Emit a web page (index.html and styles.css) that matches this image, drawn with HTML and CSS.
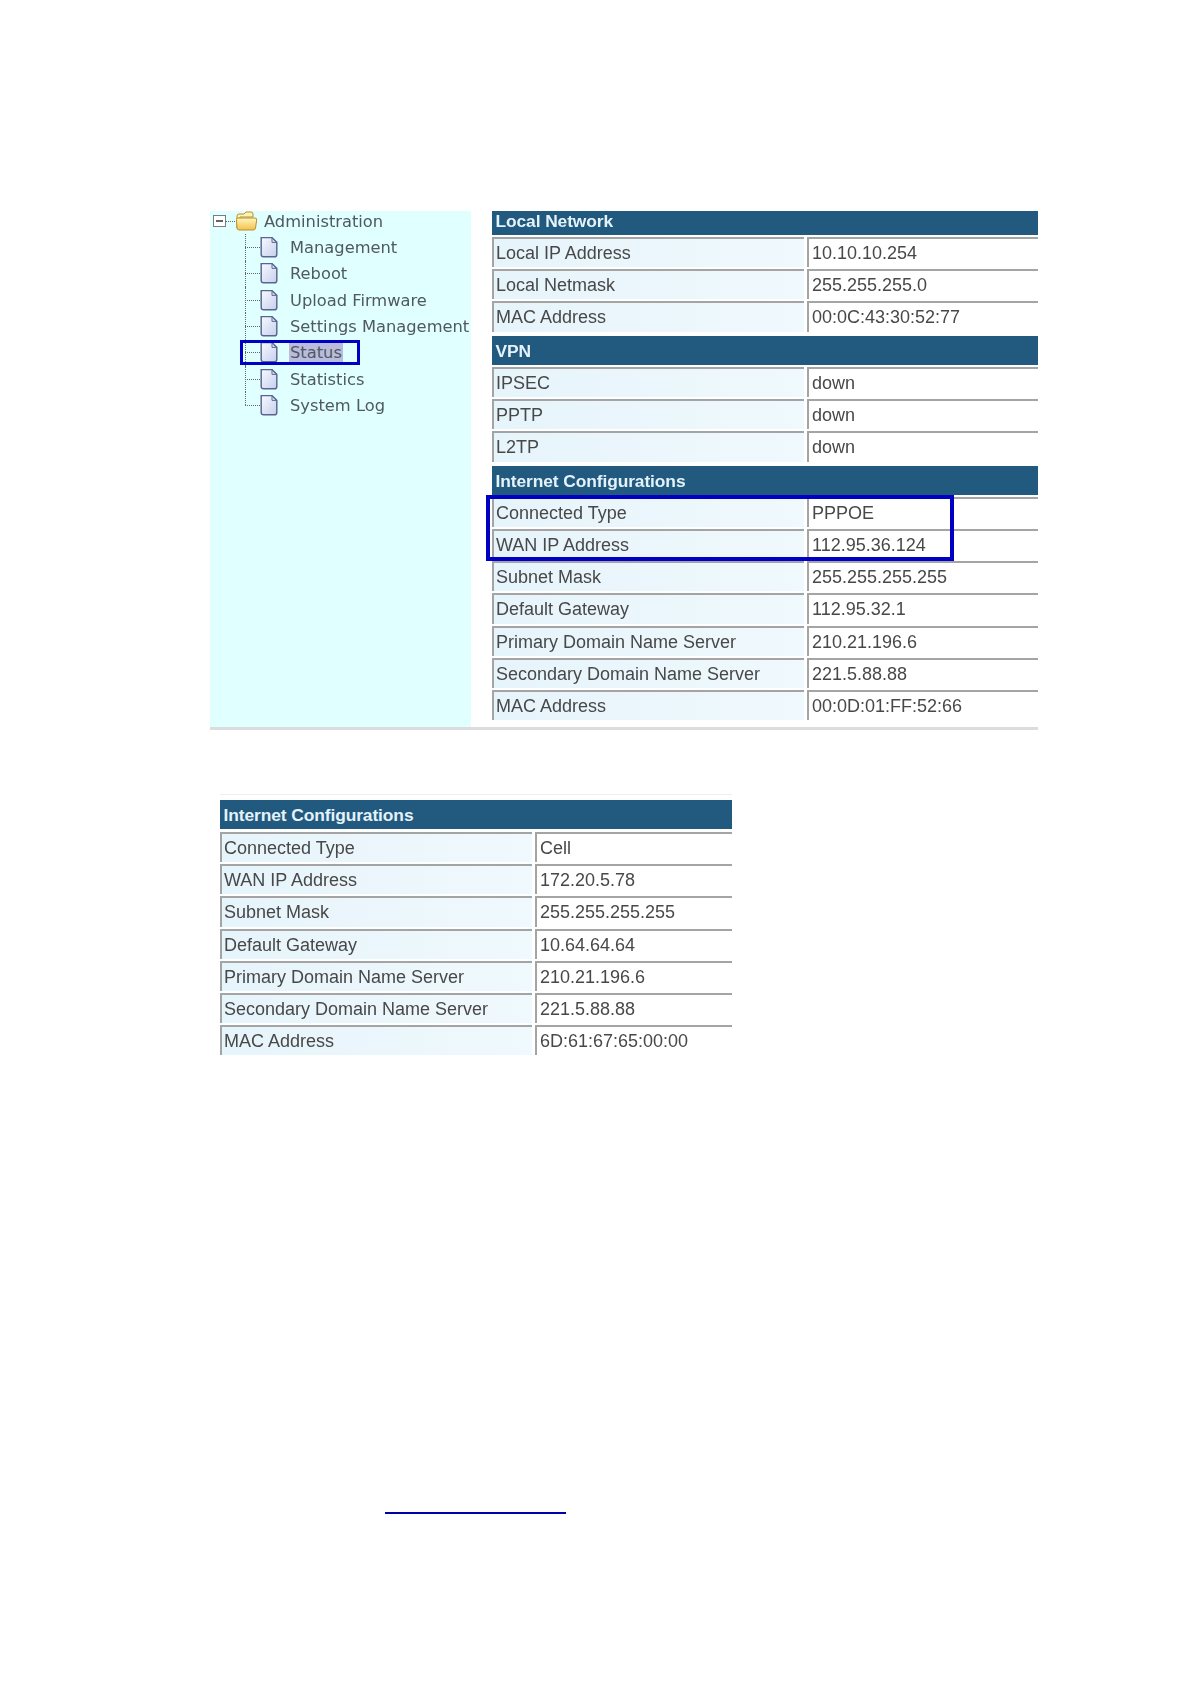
FILE: index.html
```html
<!DOCTYPE html>
<html lang="en">
<head>
<meta charset="utf-8">
<title>Router status</title>
<link rel="stylesheet" href="styles.css">
</head>
<body>
<svg class="defs" width="0" height="0" aria-hidden="true">
  <defs>
    <linearGradient id="pg" x1="0" y1="0" x2="1" y2="1"><stop offset="0" stop-color="#f8faff"/><stop offset="1" stop-color="#c6cfec"/></linearGradient>
    <linearGradient id="fd" x1="0" y1="0" x2="0" y2="1"><stop offset="0" stop-color="#fff6c0"/><stop offset="1" stop-color="#f3c24a"/></linearGradient>
    <symbol id="page" viewBox="1.5 1 15 17.5">
      <path d="M2.5 1.5H11.5L15.5 5.5V15.5Q15.5 17.5 13.5 17.5H4.5Q2.5 17.5 2.5 15.5Z" fill="url(#pg)" stroke="#59658f" stroke-width="1.2"/>
      <path d="M11.5 1.5V5.5H15.5" fill="none" stroke="#59658f" stroke-width="0.8"/>
    </symbol>
  </defs>
</svg>
<main class="page">
  <section class="shot">
    <nav class="tree">
      <div class="root">
        <svg class="minus" viewBox="0 0 13 12"><rect x="0.5" y="0.5" width="12" height="11" fill="#fff" stroke="#7c7c7c"/><path d="M3 6H10" stroke="#222" stroke-width="1.4"/></svg>
        <span class="stub"></span>
        <svg class="folder" viewBox="0 0 23 20"><path d="M2 17V5Q2 3 4 3H9L11 1H16Q18 1 18 3V6H5Z" fill="#fff3b4" stroke="#b8902a"/><path d="M1.5 8.5Q1.5 7 3 7H20Q22 7 21.7 9L20.5 17Q20.3 19 18 19H4Q2 19 2 17Z" fill="url(#fd)" stroke="#b8902a"/></svg>
        <span class="root-label">Administration</span>
      </div>
      <ul class="nodes">
        <li class="node"><span class="link"></span><svg class="leaf"><use href="#page"/></svg><span class="name">Management</span></li>
        <li class="node"><span class="link"></span><svg class="leaf"><use href="#page"/></svg><span class="name">Reboot</span></li>
        <li class="node"><span class="link"></span><svg class="leaf"><use href="#page"/></svg><span class="name">Upload Firmware</span></li>
        <li class="node"><span class="link"></span><svg class="leaf"><use href="#page"/></svg><span class="name">Settings Management</span></li>
        <li class="node"><span class="link"></span><svg class="leaf"><use href="#page"/></svg><span class="name selected">Status</span><span class="mark mark-status"></span></li>
        <li class="node"><span class="link"></span><svg class="leaf"><use href="#page"/></svg><span class="name">Statistics</span></li>
        <li class="node"><span class="link"></span><svg class="leaf"><use href="#page"/></svg><span class="name">System Log</span></li>
      </ul>
    </nav>
    <div class="info">
      <h2 class="bar bar-first">Local Network</h2>
      <div class="row"><div class="key">Local IP Address</div><div class="val">10.10.10.254</div></div>
      <div class="row"><div class="key">Local Netmask</div><div class="val">255.255.255.0</div></div>
      <div class="row"><div class="key">MAC Address</div><div class="val">00:0C:43:30:52:77</div></div>
      <h2 class="bar">VPN</h2>
      <div class="row"><div class="key">IPSEC</div><div class="val">down</div></div>
      <div class="row"><div class="key">PPTP</div><div class="val">down</div></div>
      <div class="row"><div class="key">L2TP</div><div class="val">down</div></div>
      <h2 class="bar">Internet Configurations</h2>
      <div class="marked">
        <div class="row"><div class="key">Connected Type</div><div class="val">PPPOE</div></div>
        <div class="row"><div class="key">WAN IP Address</div><div class="val">112.95.36.124</div></div>
        <span class="mark mark-wan"></span>
      </div>
      <div class="row"><div class="key">Subnet Mask</div><div class="val">255.255.255.255</div></div>
      <div class="row"><div class="key">Default Gateway</div><div class="val">112.95.32.1</div></div>
      <div class="row"><div class="key">Primary Domain Name Server</div><div class="val">210.21.196.6</div></div>
      <div class="row"><div class="key">Secondary Domain Name Server</div><div class="val">221.5.88.88</div></div>
      <div class="row"><div class="key">MAC Address</div><div class="val">00:0D:01:FF:52:66</div></div>
    </div>
  </section>
  <section class="cell-shot">
    <h2 class="bar bar-first">Internet Configurations</h2>
    <div class="row"><div class="key">Connected Type</div><div class="val">Cell</div></div>
    <div class="row"><div class="key">WAN IP Address</div><div class="val">172.20.5.78</div></div>
    <div class="row"><div class="key">Subnet Mask</div><div class="val">255.255.255.255</div></div>
    <div class="row"><div class="key">Default Gateway</div><div class="val">10.64.64.64</div></div>
    <div class="row"><div class="key">Primary Domain Name Server</div><div class="val">210.21.196.6</div></div>
    <div class="row"><div class="key">Secondary Domain Name Server</div><div class="val">221.5.88.88</div></div>
    <div class="row"><div class="key">MAC Address</div><div class="val">6D:61:67:65:00:00</div></div>
  </section>
  <div class="rule"></div>
</main>
</body>
</html>
```
FILE: styles.css
```css
* { box-sizing: border-box; }
html, body { margin: 0; background: #fff; }
.defs { position: absolute; }
.page { height: 1684px; padding: 211px 0 0 210px; overflow: hidden; }

.shot {
  display: flex;
  width: 828px;
  height: 519px;
  border-bottom: 3px solid #dcdcdc;
  filter: blur(0.35px);
}
.tree {
  width: 261px;
  background: #e0ffff;
  font: 16.3px "DejaVu Sans", Verdana, sans-serif;
  color: #505860;
}
.root { display: flex; align-items: center; height: 20px; padding-left: 3px; }
.minus { width: 13px; height: 12px; flex: none; }
.stub { width: 9px; border-top: 1px dotted #666; }
.folder { width: 23px; height: 20px; flex: none; }
.root-label { margin-left: 6px; }
.nodes { list-style: none; margin: 0 0 0 35px; padding: 3.4px 0 0; }
.node {
  position: relative;
  display: flex;
  align-items: center;
  height: 26.3px;
}
.node::before {
  content: "";
  position: absolute;
  left: 0;
  top: 0;
  bottom: 0;
  border-left: 1px dotted #666;
}
.node:last-child::before { bottom: 50%; }
.link { width: 15px; height: 0; border-top: 1px dotted #666; flex: none; }
.leaf { width: 18px; height: 21px; flex: none; }
.name { margin-left: 12px; white-space: nowrap; }
.selected { background: #b9bcdc; margin-left: 11px; padding: 0 1px; }

.mark { position: absolute; border-style: solid; border-color: #0000c4; }
.mark-status { left: -5px; top: 0.6px; width: 120px; height: 25px; border-width: 3px; }
.marked { position: relative; }
.mark-wan { left: -6px; top: 0; width: 468px; height: 66px; border-width: 4px; }

.info { width: 546px; margin-left: 21px; }
.cell-shot {
  width: 512px;
  margin: 64px 0 0 10px;
  padding-top: 5px;
  border-top: 1px solid #eeeeee;
  filter: blur(0.35px);
}
.cell-shot .bar { margin-bottom: 1px; }

.bar {
  margin: 4.4px 0 0;
  height: 29px;
  padding-left: 3.5px;
  background: #21597f;
  color: #e4f2fa;
  font: bold 17.4px/30px "Liberation Sans", Arial, sans-serif;
  letter-spacing: -0.1px;
}
.bar-first { margin-top: 0; }
.info .bar-first { height: 24px; line-height: 20px; }

.row {
  display: grid;
  grid-template-columns: 312px 1fr;
  column-gap: 3px;
  height: 32.2px;
  padding-top: 2px;
  font: 18px/28px "Liberation Sans", Arial, sans-serif;
  color: #484848;
}
.key, .val {
  border-top: 2px solid #a4a4a4;
  border-left: 2px solid #a4a4a4;
  padding-left: 2px;
  white-space: nowrap;
  overflow: hidden;
}
.key { background: linear-gradient(90deg, #e6f4fb, #f0f9fd); }
.val { background: #fff; padding-left: 3px; }

.rule { width: 181px; height: 2px; margin: 457px 0 0 175px; background: #0000a8; }
```
